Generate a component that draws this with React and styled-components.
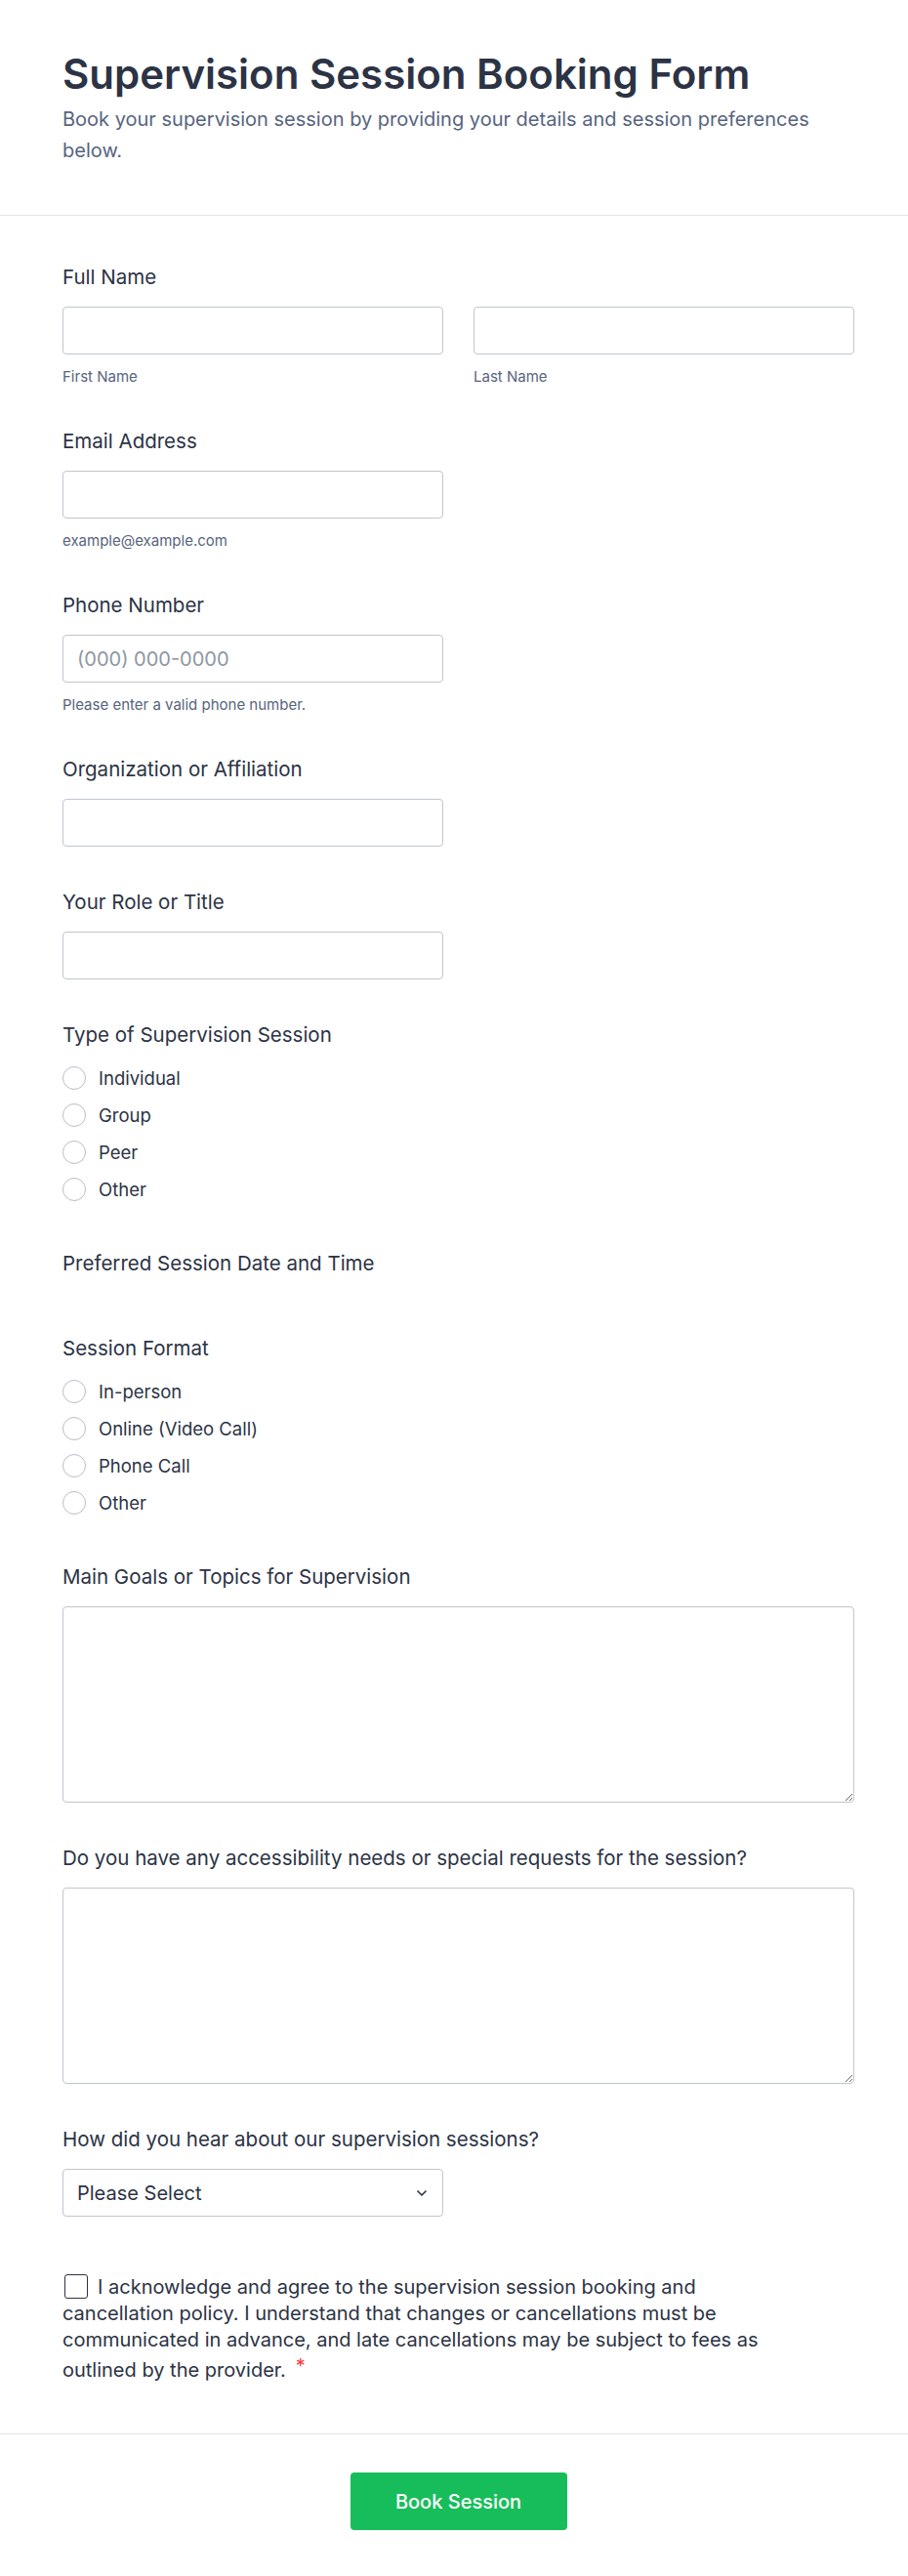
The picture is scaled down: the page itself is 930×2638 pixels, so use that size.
import React from 'react';
import styled, { createGlobalStyle } from 'styled-components';
import { ChevronDown } from 'lucide-react';

const GlobalStyle = createGlobalStyle`
  body {
    margin: 0;
    background: #ffffff;
    font-family: Inter, "Noto Sans", "Liberation Sans", sans-serif;
    color: #2c3345;
  }
  * { box-sizing: border-box; }
`;

const Page = styled.div`
  width: 100%;
  background: #fff;
`;

const Header = styled.header`
  padding: 52px 55px 50px 64px;
  border-bottom: 1px solid #e3e5ec;
`;

const Title = styled.h1`
  margin: 0;
  font-size: 42px;
  line-height: 48px;
  font-weight: 600;
  color: #2c3345;
`;

const Subtitle = styled.p`
  margin: 6px 0 0;
  font-size: 20px;
  line-height: 32px;
  color: #57647e;
`;

const FormBody = styled.div`
  padding: 51px 55px 51px 64px;
  display: flex;
  flex-direction: column;
  gap: 45px;
`;

const Field = styled.div`
  display: flex;
  flex-direction: column;
  margin-top: ${({ extraTop }) => extraTop || 0}px;
`;

const Label = styled.label`
  font-size: 20.5px;
  line-height: 24px;
  font-weight: 400;
  color: #2c3345;
  margin-bottom: 18px;
`;

const Row = styled.div`
  display: grid;
  grid-template-columns: 1fr 1fr;
  column-gap: 31px;
`;

const Col = styled.div`
  display: flex;
  flex-direction: column;
`;

const TextInput = styled.input`
  width: ${({ half }) => (half ? '390px' : '100%')};
  height: 49px;
  border: 1px solid #bfc5d2;
  border-radius: 4px;
  padding: 0 14px;
  font-family: inherit;
  font-size: 20px;
  color: #2c3345;
  background: #fff;
  &::placeholder {
    color: #8f96a3;
  }
`;

const SubLabel = styled.span`
  margin-top: 14px;
  font-size: 15px;
  line-height: 18px;
  color: #57647e;
`;

const RadioList = styled.div`
  display: flex;
  flex-direction: column;
  gap: 10px;
  padding-bottom: 5px;
`;

const RadioRow = styled.label`
  display: flex;
  align-items: center;
  gap: 13px;
  height: 28px;
  font-size: 18.5px;
  color: #2c3345;
`;

const RadioDot = styled.input.attrs({ type: 'radio' })`
  appearance: none;
  margin: 0;
  width: 24px;
  height: 24px;
  border: 1px solid #b8bdc9;
  border-radius: 50%;
  background: #fff;
`;

const TextArea = styled.textarea`
  width: 100%;
  height: 201px;
  border: 1px solid #bfc5d2;
  border-radius: 4px;
  padding: 12px 14px;
  font-family: inherit;
  font-size: 18px;
  resize: vertical;
  display: block;
`;

const SelectWrap = styled.div`
  position: relative;
  width: 390px;
  height: 49px;
`;

const Select = styled.select`
  appearance: none;
  width: 100%;
  height: 100%;
  border: 1px solid #bfc5d2;
  border-radius: 4px;
  padding: 0 14px;
  font-family: inherit;
  font-size: 20px;
  color: #2c3345;
  background: #fff;
`;

const Chevron = styled.span`
  position: absolute;
  right: 14px;
  top: 50%;
  transform: translateY(-50%);
  display: flex;
  color: #2c3345;
  pointer-events: none;
`;

const Consent = styled.p`
  margin: 0;
  font-size: 20px;
  line-height: 27px;
  color: #2c3345;
  max-width: 740px;
`;

const Check = styled.input.attrs({ type: 'checkbox' })`
  appearance: none;
  margin: 0 10px 0 2px;
  width: 24px;
  height: 25px;
  border: 1.5px solid #2c3345;
  border-radius: 3px;
  vertical-align: -5px;
  background: #fff;
`;

const Required = styled.span`
  color: #f23a3c;
  margin-left: 10px;
  font-size: 20px;
  vertical-align: 4px;
`;

const Footer = styled.div`
  border-top: 1px solid #e3e5ec;
  padding: 39px 55px 51px 64px;
  display: flex;
  justify-content: center;
`;

const SubmitButton = styled.button`
  width: 222px;
  height: 59px;
  border: none;
  border-radius: 4px;
  background: #18bd5b;
  color: #fff;
  font-family: inherit;
  font-size: 20px;
  font-weight: 500;
  cursor: pointer;
`;

const sessionTypes = ['Individual', 'Group', 'Peer', 'Other'];
const formats = ['In-person', 'Online (Video Call)', 'Phone Call', 'Other'];

function RadioGroup({ name, options }) {
  return (
    <RadioList>
      {options.map((opt) => (
        <RadioRow key={opt}>
          <RadioDot name={name} value={opt} />
          {opt}
        </RadioRow>
      ))}
    </RadioList>
  );
}

export default function App() {
  return (
    <Page>
      <GlobalStyle />
      <Header>
        <Title>Supervision Session Booking Form</Title>
        <Subtitle>
          Book your supervision session by providing your details and session preferences below.
        </Subtitle>
      </Header>

      <FormBody>
        <Field>
          <Label>Full Name</Label>
          <Row>
            <Col>
              <TextInput />
              <SubLabel>First Name</SubLabel>
            </Col>
            <Col>
              <TextInput />
              <SubLabel>Last Name</SubLabel>
            </Col>
          </Row>
        </Field>

        <Field>
          <Label>Email Address</Label>
          <TextInput half type="email" />
          <SubLabel>example@example.com</SubLabel>
        </Field>

        <Field>
          <Label>Phone Number</Label>
          <TextInput half placeholder="(000) 000-0000" />
          <SubLabel>Please enter a valid phone number.</SubLabel>
        </Field>

        <Field>
          <Label>Organization or Affiliation</Label>
          <TextInput half />
        </Field>

        <Field>
          <Label>Your Role or Title</Label>
          <TextInput half />
        </Field>

        <Field>
          <Label>Type of Supervision Session</Label>
          <RadioGroup name="type" options={sessionTypes} />
        </Field>

        <Field>
          <Label>Preferred Session Date and Time</Label>
        </Field>

        <Field>
          <Label>Session Format</Label>
          <RadioGroup name="format" options={formats} />
        </Field>

        <Field>
          <Label>Main Goals or Topics for Supervision</Label>
          <TextArea />
        </Field>

        <Field>
          <Label>Do you have any accessibility needs or special requests for the session?</Label>
          <TextArea />
        </Field>

        <Field>
          <Label>How did you hear about our supervision sessions?</Label>
          <SelectWrap>
            <Select defaultValue="">
              <option value="">Please Select</option>
              <option>Website</option>
              <option>Colleague</option>
              <option>Social Media</option>
              <option>Other</option>
            </Select>
            <Chevron>
              <ChevronDown size={16} strokeWidth={2.5} />
            </Chevron>
          </SelectWrap>
        </Field>

        <Field extraTop={14}>
          <Consent>
            <Check />
            I acknowledge and agree to the supervision session booking and cancellation policy. I understand that changes or cancellations must be communicated in advance, and late cancellations may be subject to fees as outlined by the provider.
            <Required>*</Required>
          </Consent>
        </Field>
      </FormBody>

      <Footer>
        <SubmitButton type="button">Book Session</SubmitButton>
      </Footer>
    </Page>
  );
}
